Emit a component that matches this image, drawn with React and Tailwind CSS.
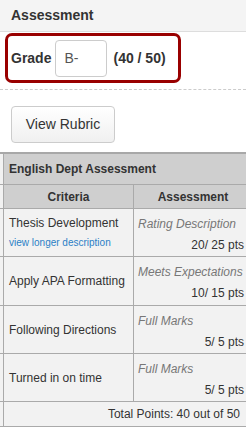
import React from 'react';

const rows = [
  { name: 'Thesis Development', link: 'view longer description', rating: 'Rating Description', pts: '20/ 25 pts', h: 'h-[47px]' },
  { name: 'Apply APA Formatting', rating: 'Meets Expectations', pts: '10/ 15 pts', h: 'h-[48px]' },
  { name: 'Following Directions', rating: 'Full Marks', pts: '5/ 5 pts', h: 'h-[47px]' },
  { name: 'Turned in on time', rating: 'Full Marks', pts: '5/ 5 pts', h: 'h-[47px]' },
];

const Strip = () => <div className="w-[4px] shrink-0 border-r border-[#aaaaaa] bg-[#f2f2f2]" />;

export default function App() {
  return (
    <div className="w-[246px] h-[427px] overflow-hidden bg-white text-[#333] font-['Liberation_Sans',Arial,sans-serif]">
      {/* Title bar */}
      <div className="h-[32px] bg-[#f4f4f4] border-b border-[#dddddd] flex items-center pl-[11px]">
        <span className="text-[14px] font-bold text-[#333]">Assessment</span>
      </div>

      {/* Grade box */}
      <div className="mt-[1px] ml-[5px] w-[176px] h-[50px] border-[3px] border-[#990000] rounded-[7px] flex items-center pl-[3px]">
        <span className="text-[14px] font-bold">Grade</span>
        <div className="ml-[4px] w-[52px] h-[37px] border border-[#cccccc] rounded-[4px] bg-white flex items-center pl-[8px] text-[14px] text-[#555]">
          B-
        </div>
        <span className="ml-[6px] text-[14px] font-bold">(40 / 50)</span>
      </div>

      <div className="mt-[6px] border-t border-dashed border-[#cccccc]" />

      {/* Button */}
      <div className="mt-[16px] ml-[11px] w-[104px] h-[37px] border border-[#cccccc] rounded-[4px] bg-gradient-to-b from-white to-[#f0f0f0] flex items-center justify-center text-[14px] text-[#333]">
        View Rubric
      </div>

      {/* Rubric table */}
      <div className="mt-[9px] w-[252px] bg-[#f2f2f2] border-t-2 border-[#a8a8a8] text-[12px]">
        <div className="flex h-[31px] border-b border-[#aaaaaa] bg-[#cfcfcf]">
          <Strip />
          <div className="flex-1 flex items-center pl-[5px] font-bold">English Dept Assessment</div>
        </div>
        <div className="flex h-[24px] border-b border-[#aaaaaa] bg-[#cfcfcf] font-bold">
          <Strip />
          <div className="w-[130px] border-r border-[#aaaaaa] flex items-center justify-center">Criteria</div>
          <div className="flex-1 flex items-center justify-center">Assessment</div>
        </div>

        {rows.map((r) => (
          <div key={r.name} className={`flex ${r.h} box-content border-b border-[#aaaaaa]`}>
            <Strip />
            <div className={`w-[130px] border-r border-[#aaaaaa] pl-[5px] flex flex-col ${r.link ? 'pt-[6px]' : 'justify-center'}`}>
              <div className="leading-[16px]">{r.name}</div>
              {r.link && <div className="mt-[5px] text-[10px] leading-[14px] text-[#2a80c6]">{r.link}</div>}
            </div>
            <div className="flex-1 pt-[7px] pl-[4px] pr-[8px]">
              <div className="italic text-[#777] leading-[16px]">{r.rating}</div>
              <div className="mt-[5px] text-right leading-[16px]">{r.pts}</div>
            </div>
          </div>
        ))}

        <div className="flex h-[25px] border-b border-[#aaaaaa]">
          <Strip />
          <div className="flex-1 flex items-center justify-end pr-[12px]">Total Points: 40 out of 50</div>
        </div>
      </div>
    </div>
  );
}
